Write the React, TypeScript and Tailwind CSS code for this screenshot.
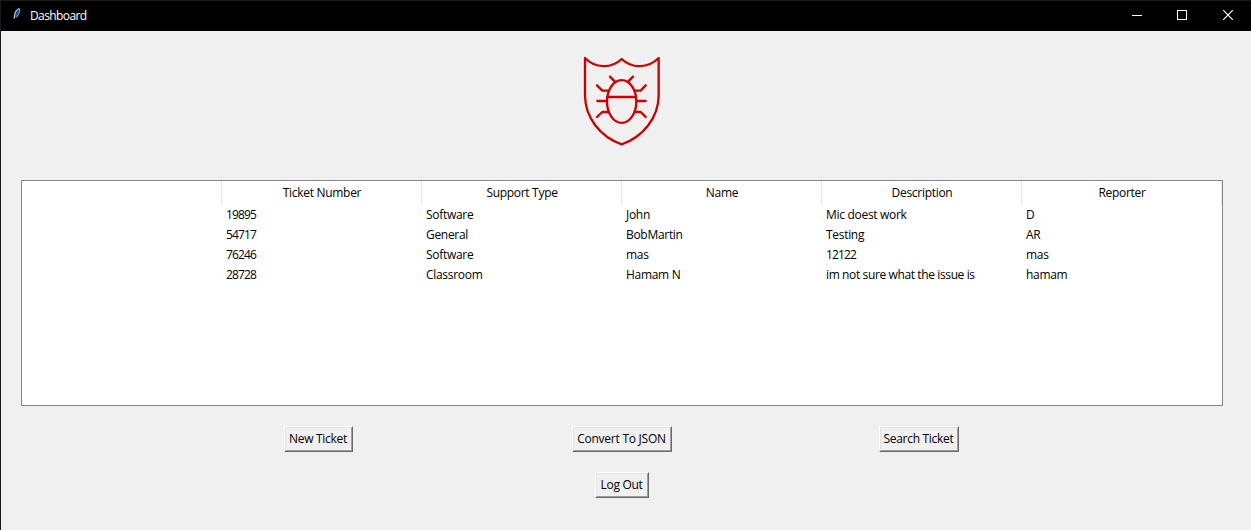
import type { ReactNode } from "react";

const columns = ["", "Ticket Number", "Support Type", "Name", "Description", "Reporter"];

const tickets = [
  ["", "19895", "Software", "John", "Mic doest work", "D"],
  ["", "54717", "General", "BobMartin", "Testing", "AR"],
  ["", "76246", "Software", "mas", "12122", "mas"],
  ["", "28728", "Classroom", "Hamam N", "im not sure what the issue is", "hamam"],
];

function TitleBar() {
  return (
    <header className="flex h-[31px] items-center border-t border-[#1a1a1a] bg-black tracking-[-0.6px] text-white">
      <svg className="ml-[9px] h-4 w-4" viewBox="0 0 16 16" fill="none">
        <path d="M9.4 0.6C7 1.400 5.200 4 4.700 6.800L4.200 10.600" stroke="#9fd0f5" strokeWidth="1.3" />
        <path d="M9.500 0.600C9.900 3.600 8.400 7 6 9.400" stroke="#5c9fe0" strokeWidth="1.3" />
        <path d="M8.400 2.400L5.400 9" stroke="#2560b0" strokeWidth="1.3" />
      </svg>
      <span className="ml-1">Dashboard</span>
      <div className="ml-auto flex">
        <button className="flex h-[30px] w-[46px] items-start justify-center pt-[9px] pl-px" aria-label="Minimize">
          <svg width="10" height="10" viewBox="0 0 10 10" shapeRendering="crispEdges">
            <path d="M0 5.5h10" stroke="white" />
          </svg>
        </button>
        <button className="flex h-[30px] w-[46px] items-start justify-center pt-[9px]" aria-label="Maximize">
          <svg width="10" height="10" viewBox="0 0 10 10" shapeRendering="crispEdges">
            <rect x="0.5" y="0.5" width="9" height="9" fill="none" stroke="white" />
          </svg>
        </button>
        <button className="flex h-[30px] w-[46px] items-start justify-center pt-[9px]" aria-label="Close">
          <svg width="10" height="10" viewBox="0 0 10 10">
            <path d="M0.2 0.2l9.6 9.6M9.8 0.2l-9.6 9.6" stroke="white" strokeWidth="1.2" />
          </svg>
        </button>
      </div>
    </header>
  );
}

function ShieldLogo() {
  return (
    <svg
      className="mt-[15px] ml-[571px] h-[110px] w-[100px]"
      viewBox="0 0 300 330"
      fill="none"
      stroke="#cc0000"
      strokeWidth="7"
      strokeLinecap="round"
      strokeLinejoin="round"
    >
      <path d="M39 36C70 68 119 68 149 39C179 68 228 68 260 36V148C260 214 214 272 149 295C84 272 39 214 39 148Z" />
      <ellipse cx="149" cy="166.500" rx="44" ry="64" />
      <path d="M106 153H192" />
      <path d="M114 92L128 106M183 92L169 106" />
      <path d="M75 118L91 134H109M221 118L206 134H189" />
      <path d="M76 165H104M221 165H194" />
      <path d="M75 213L91 198H109M221 213L206 198H189" />
    </svg>
  );
}

function RaisedButton({ className, children }: { className: string; children: ReactNode }) {
  return (
    <button
      className={`h-[26px] border border-t-white border-r-[#696969] border-b-[#696969] border-l-white ${className}`}
    >
      <span className="flex h-full items-center justify-center border border-t-[#e3e3e3] border-r-[#a0a0a0] border-b-[#a0a0a0] border-l-[#e3e3e3] pr-px whitespace-nowrap">
        {children}
      </span>
    </button>
  );
}

export default function App() {
  return (
    <div className="flex h-[530px] w-[1251px] flex-col overflow-hidden border-l border-[#1a1a1a] bg-[#f0f0f0] font-['Open_Sans','Noto_Sans',sans-serif] text-[12px] leading-4 tracking-[-0.3px] text-black">
      <TitleBar />
      <ShieldLogo />
      <section className="mt-6 ml-5 h-[226px] w-[1202px] border border-[#828790] bg-white">
        <div className="grid h-6 grid-cols-6">
          {columns.map((name, i) => (
            <div key={i} className="flex items-center justify-center border-r border-[#e5e5e5] pl-px">
              {name}
            </div>
          ))}
        </div>
        {tickets.map((ticket) => (
          <div key={ticket[1]} className="grid h-5 grid-cols-6 items-center">
            {ticket.map((value, i) => (
              <span
                key={i}
                className={`pl-1 whitespace-nowrap ${
                  /^\d+$/.test(value) ? "tracking-[-0.85px]" : value.length > 20 ? "tracking-[-0.38px]" : ""
                }`}
              >
                {value}
              </span>
            ))}
          </div>
        ))}
      </section>
      <div className="mt-5 flex">
        <RaisedButton className="ml-[283px] w-[69px]">New Ticket</RaisedButton>
        <RaisedButton className="ml-[219px] w-[100px] tracking-[-0.25px]">Convert To JSON</RaisedButton>
        <RaisedButton className="ml-[207px] w-[80px]">Search Ticket</RaisedButton>
      </div>
      <RaisedButton className="mt-5 ml-[594px] w-[54px]">Log Out</RaisedButton>
    </div>
  );
}
